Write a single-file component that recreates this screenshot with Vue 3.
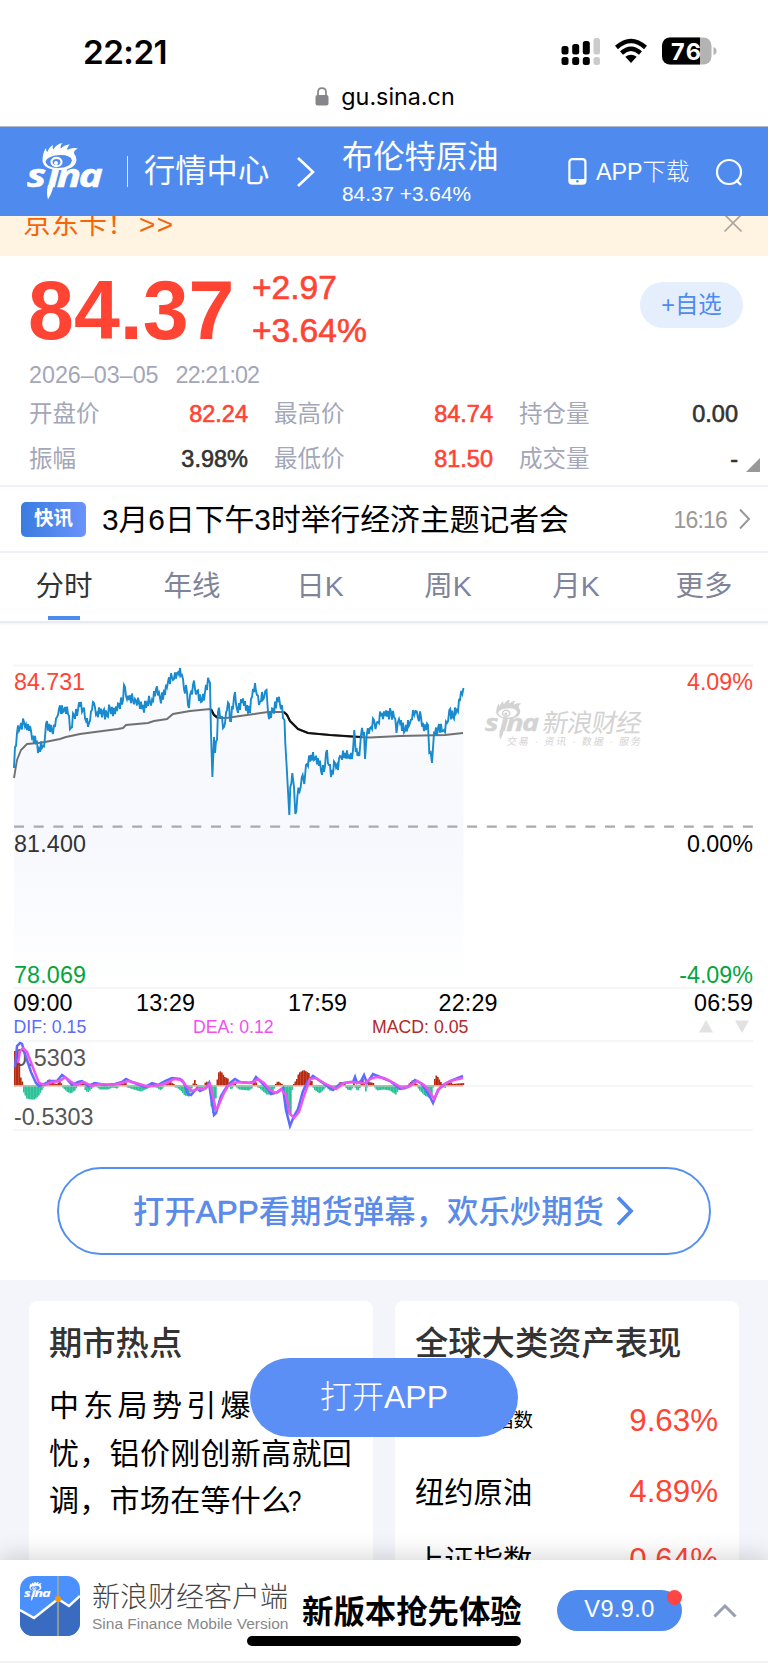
<script setup>
const quote = {
  name: '布伦特原油',
  price: '84.37',
  change: '+2.97',
  percent: '+3.64%',
  date: '2026–03–05',
  time: '22:21:02'
}

const stats = [
  { label: '开盘价', value: '82.24', up: true },
  { label: '最高价', value: '84.74', up: true },
  { label: '持仓量', value: '0.00' },
  { label: '振幅', value: '3.98%' },
  { label: '最低价', value: '81.50', up: true },
  { label: '成交量', value: '-' }
]

const tabs = ['分时', '年线', '日K', '周K', '月K', '更多']

const assets = [
  { name: '指数', value: '9.63%', small: true },
  { name: '纽约原油', value: '4.89%' },
  { name: '上证指数', value: '0.64%' }
]

const timeLabels = [
  { x: 13.5, text: '09:00' },
  { x: 136, text: '13:29' },
  { x: 288, text: '17:59' },
  { x: 438.5, text: '22:29' }
]

// intraday price, chart coordinates
const price = [
  [14, 146], [15, 125], [17, 111], [20, 106], [24, 100], [27, 108], [30, 104], [33, 115], [36, 121], [39, 127],
  [43, 124], [45, 115], [47, 99], [50, 110], [55, 105], [57, 95], [59, 87], [63, 90], [65, 85], [68, 92],
  [71, 106], [74, 93], [78, 88], [81, 80], [83, 88], [86, 99], [89, 101], [92, 88], [94, 81], [97, 91],
  [103, 89], [107, 94], [110, 86], [115, 92], [119, 82], [123, 78], [124, 63], [126, 74], [129, 78], [135, 77],
  [139, 80], [142, 87], [147, 81], [152, 78], [156, 67], [160, 76], [165, 73], [168, 60], [172, 55], [174, 57],
  [177, 51], [180, 46], [182, 53], [184, 67], [187, 70], [189, 86], [191, 70], [193, 63], [197, 69], [201, 80],
  [205, 70], [209, 59], [210, 61], [211, 111], [212.4, 155], [214, 115], [215, 131], [217, 118], [218, 90], [221, 95],
  [224, 105], [227, 88], [229, 82], [230, 99], [233, 86], [235, 70], [237, 87], [242, 81], [247, 83], [250, 91],
  [252, 75], [255, 61], [257, 73], [259, 83], [262, 70], [264, 76], [266.5, 68], [268, 90], [271, 96], [273, 87],
  [278, 80], [282, 83], [283, 96], [284.5, 98], [285.3, 121], [286.7, 145], [289.3, 193], [290.3, 165], [292.3, 151], [294, 165],
  [295.3, 192], [297.3, 175], [300.7, 165], [302.7, 153], [304.3, 162], [306, 143], [311, 133], [315, 137], [318, 136], [321, 149],
  [325, 144], [327, 128], [329, 143], [331, 155], [335, 141], [338, 148], [340, 134], [345, 131], [350, 137], [353, 128],
  [354.3, 108], [355.7, 130], [359.3, 134], [361, 113], [364, 110], [365, 137], [366.7, 113], [370, 106], [374, 98], [375.5, 107],
  [378, 100], [382, 91], [385, 94], [391, 90], [394, 95], [396.5, 111], [399, 97], [405, 109], [410, 101], [413, 88],
  [415.5, 89], [418, 96], [421, 95], [424, 109], [428, 103], [429.3, 131], [432, 141], [434, 111], [438, 106], [443, 109],
  [447, 101], [449.3, 88], [453, 95], [457, 88], [460, 78], [463.5, 66]
]

const average = [
  [14, 156], [17, 138], [21, 128], [27, 122], [38, 121], [45, 120], [60, 117], [66, 115], [80, 112], [95, 110],
  [118, 107], [123, 106], [126, 103], [148, 101], [154, 99], [167, 97], [173, 92], [190, 89], [210, 87], [214, 93],
  [218, 96], [226, 96], [240, 94], [268, 90], [284, 90], [287, 93], [290, 99], [294, 103], [298, 107], [308, 111],
  [330, 113], [355, 115], [370, 115.5], [400, 114], [445, 113], [463, 111]
]

const dif = [
  [15, 445], [17, 424], [20, 421], [22, 422], [26, 435], [31, 450], [36, 461], [39, 464], [44, 462], [50, 459],
  [57, 459], [62, 453], [66, 456], [72, 463], [78, 460], [82, 459], [88, 464], [95, 461], [105, 463], [115, 462],
  [122, 460], [126, 457], [132, 460], [145, 465], [152, 461], [158, 463], [165, 459], [172, 456], [180, 457], [184, 461],
  [188, 472], [191, 473], [197, 466], [200, 469], [206, 466], [209, 461], [211, 475], [214, 493], [216, 491], [221, 474],
  [226, 466], [230, 461], [235, 457], [240, 460], [249, 461], [253, 460], [256, 455], [262, 461], [268, 467], [271, 472],
  [278, 470], [283, 466], [286, 488], [290, 504], [294, 494], [298, 487], [303, 469], [308, 459], [313, 454], [320, 459],
  [327, 464], [333, 468], [340, 462], [350, 460], [353, 460], [355, 455], [357, 461], [361, 459], [364, 453], [367, 461],
  [373, 452], [380, 455], [390, 459], [400, 467], [408, 465], [415, 458], [422, 462], [430, 475], [433, 481], [438, 468],
  [442, 464], [450, 459], [463, 454]
]

const dea = [
  [18, 441], [20, 429], [23, 426], [27, 430], [32, 443], [39, 461], [45, 463], [52, 460], [60, 459], [65, 455],
  [70, 459], [76, 463], [84, 460], [92, 464], [100, 462], [112, 463], [122, 461], [128, 459], [136, 461], [146, 464],
  [153, 464], [160, 463], [167, 461], [174, 457], [182, 458], [186, 464], [192, 469], [198, 467], [204, 467], [210, 462],
  [213, 475], [216, 488], [218, 485], [223, 473], [228, 464], [234, 461], [239, 460], [252, 461], [258, 457], [264, 461],
  [270, 468], [276, 471], [281, 467], [286, 473], [290, 492], [294, 496], [299, 490], [304, 474], [310, 457], [316, 456],
  [324, 461], [330, 464], [336, 467], [344, 461], [352, 460], [360, 461], [365, 461], [370, 457], [376, 455], [384, 456],
  [394, 461], [402, 466], [410, 464], [417, 459], [424, 463], [430, 470], [434, 477], [439, 467], [446, 461], [454, 458],
  [463, 456]
]

const histogram = [
  [14, 34], [17, 33], [18.4, 25], [19, 8], [21, 7], [22, 0], [23, -6], [26, -12], [30, -13], [34, -13], [38, -9], [42, -2],
  [44, 1], [48, 6], [52, 2], [56, 1], [59, 4], [61, 1], [63, -2], [66, -5], [70, -7], [74, -4], [76, -1],
  [80, 4], [83, 1], [84, -3], [87, -6], [91, -2], [94, 4], [97, -1], [99, -3], [107, -3], [112, -1], [116, -2],
  [119, 1], [124, 4], [127, -1], [133, -3], [140, -5], [147, -2], [153, 2], [156, -1], [160, -4], [164, 1],
  [168, 4], [173, 1], [176, -1], [180, -4], [184, -9], [188, -10], [191, -2], [194, 5], [197, -3], [201, -5],
  [204, 2], [207, 4], [209, -5], [211, -25], [213, -28], [215, -12], [216, -1], [217, 12], [220, 14], [224, 8],
  [228, 6], [229, -2], [231, -3], [234, 3], [238, -3], [248, -4], [251, -2], [254, 7], [256, 1], [259, -2],
  [266, -8], [270, -8], [273, -3], [277, 4], [281, 1], [282, -4], [284, -14], [287, -28], [290, -27], [291, -5],
  [293, 1], [296, 6], [298, 12], [303, 15], [308, 12], [311, 4], [313, -3], [319, -7], [324, -2], [326, 1],
  [328, -4], [333, -4], [337, -1], [339, 3], [344, 2], [346, -3], [351, -4], [353, 4], [355, -3], [358, -4],
  [362, 6], [365, -5], [368, 3], [373, 2], [376, -4], [383, -3], [389, -4], [395, -8], [398, -3], [404, -3],
  [408, 1], [412, 5], [416, 1], [418, -3], [424, -9], [430, -12], [432, -4], [433, 2], [435, 10], [437, 8],
  [440, 3], [444, -2], [449, 4], [452, 1], [463, 2]
]

const toPoints = (list) => list.map((p) => p.join(',')).join(' ')

function sample(list, x) {
  const i = list.findIndex((p) => p[0] >= x)
  if (i <= 0) return list[0][1]
  const [x0, y0] = list[i - 1]
  const [x1, y1] = list[i]
  return y0 + ((y1 - y0) * (x - x0)) / (x1 - x0)
}

// add minute noise between the main price points
const ticks = []
const noise = [4.5, -5, 2, -3, 6, -4.5, 3.5, -6, 1, 5, -3.5]
price.forEach((p, i) => {
  ticks.push(p)
  const next = price[i + 1]
  if (!next || Math.abs(next[1] - p[1]) > 18) return
  const gap = next[0] - p[0]
  const count = Math.floor(gap / 0.9)
  for (let k = 1; k < count; k++) {
    const x = p[0] + (gap * k) / count
    ticks.push([x.toFixed(1), (sample(price, x) + noise[(i * 3 + k) % noise.length]).toFixed(1)])
  }
})
const pricePoints = toPoints(ticks)
const areaPoints = `14,365 ${pricePoints} 463.5,365`

const bars = []
for (let x = 14; x < 463; x += 1.5) {
  const h = sample(histogram, x)
  bars.push({ x, h: Math.max(Math.abs(h), 1), up: h > 0 })
}
</script>

<template>
  <div class="page">
    <svg class="defs" width="0" height="0">
      <symbol id="sina" viewBox="0 0 77 57">
        <path
          fill="currentColor"
          d="M15.500 18 Q15.500 10 19 5 Q19 8 20.500 9 Q22 4 26 2 Q25 5 26.500 6.500 Q29 1 35.500 0 Q32.500 3 34 5.500 Q37.500 1.500 43 1.500 Q39.500 4.500 40.500 7 Q45 4 51 5.500 Q46.500 7.500 47 10.500 Q49.500 13 49.500 17 Q48.500 26.500 33 27 Q17 27 15.500 18 Z M18.500 18.500 Q19.500 25 31 25 Q43.500 25 45 17.500 Q44 12 33.500 12 Q20.500 12.500 18.500 18.500 Z"
          fill-rule="evenodd"
        />
        <ellipse cx="29.500" cy="19" rx="5" ry="4.200" fill="none" stroke="currentColor" stroke-width="2.200" />
        <circle cx="29" cy="20" r="2" fill="currentColor" />
        <text
          x="0 16 23.300 40.500" y="44.500" font-size="31.500" fill="currentColor"
          stroke="currentColor" stroke-width="0.500" transform="scale(1.28 1)" class="wordmark"
        >sına</text>
        <path fill="currentColor" d="M21 42 H26.500 Q25.500 49 21 56.500 Q19 50 21 42 Z" />
      </symbol>
    </svg>

    <header class="status">
      <div class="status-row">
        <span class="clock">22:21</span>
        <svg class="status-icons" width="158" height="30" viewBox="0 0 158 30">
          <g fill="#000">
            <rect x="0.500" y="9" width="7" height="8.500" rx="2.500" />
            <rect x="11.200" y="7" width="7" height="10.500" rx="2.500" />
            <rect x="21.800" y="4" width="7" height="13.500" rx="2.500" />
            <rect x="0.500" y="20" width="7" height="8" rx="2.500" />
            <rect x="11.200" y="20" width="7" height="8" rx="2.500" />
            <rect x="21.800" y="20" width="7" height="8" rx="2.500" />
          </g>
          <g fill="#cbcbcb">
            <rect x="32.500" y="1" width="6.500" height="16.500" rx="2.500" />
            <rect x="32.500" y="20" width="6.500" height="8" rx="2.500" />
          </g>
          <g fill="none" stroke="#000" stroke-width="4.400">
            <path d="M55.500 10.500 Q70 -2.500 84.500 10.500" />
            <path d="M60.500 16 Q70 7.500 79.500 16" />
          </g>
          <path d="M64.300 19.800 Q70 15.500 75.700 19.800 L70 26 Z" />
          <rect x="101" y="0.500" width="49.500" height="27" rx="8" fill="#b3b3b3" />
          <path d="M109 .5 H139 V27.500 H109 A8 8 0 0 1 101 19.500 V8.500 A8 8 0 0 1 109 .5Z" />
          <path d="M152.500 10 Q155.500 11 155.500 14 Q155.500 17 152.500 18Z" fill="#b3b3b3" />
          <text x="110" y="22.500" fill="#fff" font-size="23.500" font-weight="700" textLength="30" class="sf">76</text>
        </svg>
      </div>
      <div class="url">
        <svg width="14" height="19" viewBox="0 0 14 19">
          <path d="M3 9 V5.500 Q3 1.200 7 1.200 Q11 1.200 11 5.500 V9" fill="none" stroke="#85858a" stroke-width="1.700" />
          <rect x="0.500" y="8" width="13" height="10.500" rx="2" fill="#85858a" />
        </svg>
        <span>gu.sina.cn</span>
      </div>
    </header>

    <nav class="topbar">
      <svg class="logo" width="77" height="57"><use href="#sina" /></svg>
      <i class="divider"></i>
      <span class="center">行情中心</span>
      <svg class="crumb" width="20" height="32" viewBox="0 0 20 32">
        <path d="M2 2 L17 16 L2 30" fill="none" stroke="#fff" stroke-width="2.600" />
      </svg>
      <div class="instrument">
        <strong>{{ quote.name }}</strong>
        <span>{{ quote.price }} {{ quote.percent }}</span>
      </div>
      <svg width="19" height="27" viewBox="0 0 19 27">
        <rect x="1.400" y="1.200" width="16" height="24.500" rx="3" fill="none" stroke="#fff" stroke-width="2.200" />
        <path d="M1.500 21 H17 V23 Q17 25 15 25 H3.500 Q1.500 25 1.500 23Z" fill="#fff" />
        <circle cx="9.400" cy="23.200" r="1.300" fill="#4f8bee" />
      </svg>
      <span class="download">APP下载</span>
      <svg class="search" width="28" height="28" viewBox="0 0 28 28">
        <circle cx="14" cy="14" r="12" fill="none" stroke="#fff" stroke-width="2.200" />
        <path d="M21 22 L26 27" stroke="#fff" stroke-width="2.400" />
      </svg>
    </nav>

    <main class="content">
      <div class="notice">
        <span>京东卡！<b class="more">&gt;&gt;</b></span>
        <svg width="20" height="20" viewBox="0 0 20 20">
          <path d="M1.500 1.500 L18.500 18.500 M18.500 1.500 L1.500 18.500" stroke="#aaa59e" stroke-width="1.700" />
        </svg>
      </div>

      <section class="quote">
        <div class="headline">
          <span class="price">{{ quote.price }}</span>
          <div class="delta">
            <span>{{ quote.change }}</span>
            <span>{{ quote.percent }}</span>
          </div>
          <button type="button" class="add">+自选</button>
        </div>
        <p class="stamp"><span>{{ quote.date }}</span><span>{{ quote.time }}</span></p>
        <div class="stats">
          <div v-for="item in stats" :key="item.label" class="stat">
            <span class="stat-label">{{ item.label }}</span>
            <span class="stat-value" :class="{ up: item.up }">{{ item.value }}</span>
          </div>
        </div>
        <i class="corner"></i>
      </section>

      <section class="flash">
        <span class="badge">快讯</span>
        <span class="flash-title">3月6日下午3时举行经济主题记者会</span>
        <span class="flash-time">16:16</span>
        <svg width="13" height="22" viewBox="0 0 13 22">
          <path d="M2 1.500 L11 11 L2 20.500" fill="none" stroke="#999" stroke-width="2" />
        </svg>
      </section>

      <div class="tabs">
        <span v-for="(tab, i) in tabs" :key="tab" class="tab" :class="{ active: i === 0 }">{{ tab }}</span>
      </div>

      <svg class="chart" width="768" height="517" viewBox="0 1 768 517">
        <defs>
          <linearGradient id="fade" x1="0" y1="0" x2="0" y2="1">
            <stop offset="0" stop-color="#f9fbfe" />
            <stop offset="0.550" stop-color="#f6f8fd" />
            <stop offset="1" stop-color="#fff" />
          </linearGradient>
        </defs>
        <path d="M13 43.500 H753 M13 366 H753 M13 419 H753 M13 464 H753 M13 508 H753" stroke="#f5f6f8" stroke-width="2" />
        <polygon :points="areaPoints" fill="url(#fade)" />

        <g class="watermark">
          <svg x="485" y="77.500" width="55" height="41"><use href="#sina" /></svg>
          <text x="561" y="110.500" font-size="25.500" textLength="99" transform="skewX(-10)">新浪财经</text>
          <text x="528" y="123" font-size="10" textLength="134" transform="skewX(-10)">交易 · 资讯 · 数据 · 服务</text>
        </g>

        <path d="M14 204.700 H753" stroke="#aaa" stroke-width="2.200" stroke-dasharray="10 9.700" />
        <polyline :points="toPoints(average)" fill="none" stroke="#707070" stroke-width="1.900" />
        <path d="M211 87 L214 93 L218 96 M284 90 L287 93 L290 99 L294 103 L298 107 L308 111 L330 113 L362 115" fill="none" stroke="#111" stroke-width="2.200" />
        <polyline :points="pricePoints" fill="none" stroke="#188acd" stroke-width="1.900" />

        <g font-size="23.300">
          <text x="14" y="68" fill="#ff4433" textLength="71">84.731</text>
          <text x="14" y="230" fill="#333" textLength="72">81.400</text>
          <text x="14" y="361" fill="#00a63e" textLength="72">78.069</text>
          <text x="753" y="68" fill="#ff4433" text-anchor="end">4.09%</text>
          <text x="753" y="230" text-anchor="end">0.00%</text>
          <text x="753" y="361" fill="#00a63e" text-anchor="end">-4.09%</text>
          <text v-for="label in timeLabels" :key="label.text" :x="label.x" y="388.500" textLength="59">{{ label.text }}</text>
          <text x="753" y="388.500" text-anchor="end" textLength="59">06:59</text>
          <text x="14" y="443.500" fill="#555" textLength="72">0.5303</text>
          <text x="14" y="502.500" fill="#555" textLength="79.500">-0.5303</text>
        </g>
        <g font-size="17.700">
          <text x="13.500" y="410.500" fill="#5b6cff">DIF: 0.15</text>
          <text x="193" y="410.500" fill="#f050f0">DEA: 0.12</text>
          <text x="372" y="410.500" fill="#b22a2a">MACD: 0.05</text>
        </g>
        <path d="M699 410.500 L706 398 L713 410.500Z M735 398.500 H749 L742 411Z" fill="#e2e2e2" />

        <path d="M14 463.700 H463" stroke="#f0a090" stroke-width="1.500" />
        <rect
          v-for="bar in bars" :key="bar.x" :x="bar.x" :y="bar.up ? 463 - bar.h : 464.5"
          width="1.700" :height="bar.h" :fill="bar.up ? '#b82b10' : '#2cc197'"
        />
        <polyline :points="toPoints(dif)" fill="none" stroke="#5b6cff" stroke-width="2.500" />
        <polyline :points="toPoints(dea)" fill="none" stroke="#ee55ee" stroke-width="2.500" />
      </svg>

      <button type="button" class="cta">
        <span>打开<b class="latin">APP</b>看期货弹幕，欢乐炒期货</span>
        <svg width="20" height="30" viewBox="0 0 20 30">
          <path d="M3 1.500 L16 15 L3 28.500" fill="none" stroke="#5089ee" stroke-width="3.800" />
        </svg>
      </button>

      <section class="cards">
        <article class="card">
          <h2>期市热点</h2>
          <p class="story"><span class="wide">中东局势引爆</span><br>忧，铝价刚创新高就回<br>调，市场在等什么<span class="mark">?</span></p>
        </article>
        <article class="card">
          <h2>全球大类资产表现</h2>
          <div v-for="asset in assets" :key="asset.name" class="asset">
            <span :class="{ small: asset.small }">{{ asset.name }}</span>
            <span class="asset-value">{{ asset.value }}</span>
          </div>
        </article>
      </section>
    </main>

    <button type="button" class="open-app">打开APP</button>

    <footer class="download-bar">
      <svg class="app-icon" width="60" height="60" viewBox="0 0 60 60">
        <defs>
          <clipPath id="icon"><rect width="60" height="60" rx="13" /></clipPath>
        </defs>
        <g clip-path="url(#icon)">
          <rect width="60" height="60" fill="#4a90ff" />
          <path d="M0 35 L14 43 L38 24 L49 30 L60 21 V60 H0Z" fill="#396bc0" />
          <path d="M0 34 L14 42 L38 23 L49 30 L60 20" fill="none" stroke="#fff" stroke-width="2.400" />
          <path d="M38 0 V60" stroke="#a8a88f" stroke-width="1.500" />
          <circle cx="38" cy="23" r="3" fill="#ff9800" />
          <svg x="4" y="5.500" width="27" height="20" class="icon-logo"><use href="#sina" /></svg>
        </g>
      </svg>
      <div class="app-name">
        <span class="app-cn">新浪财经客户端</span>
        <span class="app-en">Sina Finance Mobile Version</span>
      </div>
      <strong class="slogan">新版本抢先体验</strong>
      <span class="version">V9.9.0<i class="dot"></i></span>
      <svg class="up-arrow" width="24" height="14" viewBox="0 0 24 14">
        <path d="M1.500 12.500 L12 2 L22.500 12.500" fill="none" stroke="#9a9fb2" stroke-width="3" />
      </svg>
      <i class="home-indicator"></i>
    </footer>
  </div>
</template>

<style>
body {
  margin: 0;
  background: #fff;
}
</style>

<style scoped>
.page {
  position: relative;
  display: flex;
  flex-direction: column;
  width: 768px;
  height: 1663px;
  overflow: hidden;
  font-family: 'Liberation Sans', 'Noto Sans CJK SC', sans-serif;
  color: #000;
}

button {
  padding: 0;
  border: 0;
  font-family: inherit;
}

svg {
  display: block;
  flex: none;
}

.defs {
  position: absolute;
}

.wordmark {
  font-family: 'Open Sans', sans-serif;
  font-weight: 700;
  font-style: italic;
}

.sf {
  font-family: Inter, sans-serif;
}

.status {
  box-sizing: border-box;
  height: 127px;
  padding-top: 31px;
  border-bottom: 1px solid #b5bac6;
  font-family: Inter, sans-serif;
}

.status-row {
  display: flex;
  justify-content: space-between;
  align-items: center;
  height: 41px;
  padding: 0 49px 0 83px;
}

.clock {
  font-size: 33.2px;
  font-weight: 600;
  letter-spacing: -0.5px;
}

.url {
  display: flex;
  justify-content: center;
  align-items: center;
  gap: 12px;
  height: 48px;
  padding-left: 2px;
  font-size: 23.3px;
}

.topbar {
  display: flex;
  align-items: center;
  box-sizing: border-box;
  height: 89px;
  padding: 0 25px 0 26px;
  background: #4f8bee;
  color: #fff;
  flex: none;
}

.logo {
  margin-left: 1px;
}

.divider {
  width: 1px;
  height: 31px;
  margin-left: 23px;
  background: #dce8fc;
}

.center {
  width: 124px;
  margin-left: 16px;
  font-size: 31.3px;
  line-height: 40px;
  white-space: nowrap;
}

.crumb {
  margin-left: 28px;
}

.instrument {
  display: flex;
  flex-direction: column;
  width: 226px;
  margin-left: 26px;
  padding-top: 2px;
  font-size: 20.8px;
  line-height: 31px;
}

.instrument strong {
  font-size: 31.3px;
  font-weight: 400;
  line-height: 41px;
}

.download {
  width: 93px;
  margin: -4px 0 0 9px;
  font-size: 23.3px;
  font-weight: 300;
  white-space: nowrap;
}

.search {
  margin-left: auto;
}

.content {
  flex: 1;
  min-height: 0;
  overflow: hidden;
}

.notice {
  display: flex;
  justify-content: space-between;
  box-sizing: border-box;
  height: 40px;
  padding: 0 25px 0 23px;
  overflow: hidden;
  background: #fff3e2;
  color: #f5650a;
  font-size: 28px;
  line-height: 40px;
}

.notice span {
  margin-top: -11px;
}

.notice .more {
  margin-left: 4px;
  font-weight: 400;
  letter-spacing: 1.5px;
}

.notice svg {
  margin-top: -3px;
}

.quote {
  position: relative;
  box-sizing: border-box;
  height: 231px;
  padding: 10px 25px 0 28px;
  border-bottom: 2px solid #f0f1f7;
}

.headline {
  display: flex;
  height: 90px;
  color: #ff4433;
}

.price {
  width: 224px;
  font-size: 82.5px;
  font-weight: 700;
  line-height: 88px;
}

.delta {
  display: flex;
  flex-direction: column;
  font-size: 33.6px;
  line-height: 43px;
  -webkit-text-stroke: 0.6px;
}

.add {
  width: 103px;
  height: 46px;
  margin: 16px 0 0 auto;
  padding-bottom: 5px;
  border-radius: 23px;
  background: #e4eefd;
  color: #4f8bee;
  font-size: 23.4px;
}

.stamp {
  display: flex;
  gap: 17px;
  margin: 5px 0 0;
  padding-left: 1px;
  color: #a3a7b8;
  font-size: 23.3px;
  line-height: 28px;
}

.stamp span:last-child {
  letter-spacing: -0.9px;
}

.stats {
  display: grid;
  grid-template-columns: repeat(3, 219px);
  column-gap: 26px;
  margin-top: 3px;
  padding-left: 1px;
}

.stat {
  display: flex;
  justify-content: space-between;
  height: 45px;
  font-size: 23.5px;
  line-height: 45px;
}

.stat-label {
  color: #a3a7b8;
}

.stat-value {
  color: #333;
  -webkit-text-stroke: 0.6px;
}

.stat-value.up {
  color: #ff4433;
}

.corner {
  position: absolute;
  right: 8px;
  bottom: 13px;
  border-left: 14px solid transparent;
  border-bottom: 14px solid #999;
}

.flash {
  display: flex;
  align-items: center;
  box-sizing: border-box;
  height: 66px;
  padding: 0 17px 0 21px;
  border-bottom: 2px solid #f0f1f7;
}

.badge {
  width: 65px;
  height: 35px;
  border-radius: 5px;
  background: linear-gradient(90deg, #3a7ce0, #6b93fa);
  color: #fff;
  font-size: 19.5px;
  font-weight: 700;
  line-height: 33px;
  text-align: center;
}

.flash-title {
  margin-left: 16px;
  padding-top: 2px;
  font-size: 29.8px;
  line-height: 44px;
}

.flash-time {
  margin: 2px 11px 0 auto;
  color: #999;
  font-size: 23px;
  letter-spacing: -0.8px;
}

.tabs {
  display: grid;
  grid-template-columns: repeat(6, 1fr);
  box-sizing: border-box;
  height: 70px;
  border-bottom: 2px solid #e9ebf4;
  box-shadow: 0 1px 2px #f1f2f8;
}

.tab {
  display: flex;
  flex-direction: column;
  align-items: center;
  padding-top: 11px;
  color: #7f8499;
  font-size: 28.5px;
  line-height: 44px;
}

.tab.active {
  color: #333;
}

.tab.active::after {
  content: '';
  width: 32px;
  height: 4px;
  margin-top: 8px;
  background: #4f8bee;
}

.chart {
  font-family: 'Liberation Sans', 'Noto Sans CJK SC', sans-serif;
}

.watermark {
  color: #d3d3d3;
  fill: #d3d3d3;
}

.cta {
  display: flex;
  justify-content: center;
  align-items: center;
  gap: 11px;
  box-sizing: border-box;
  width: 654px;
  height: 88px;
  margin: 27px auto 25px;
  border: 2px solid #5590f0;
  border-radius: 44px;
  background: #fff;
  color: #5b8be8;
  font-size: 31.4px;
  font-weight: 500;
}

.cta span {
  margin-top: -4px;
}

.latin {
  font-weight: 400;
  -webkit-text-stroke: 0.7px;
}

.cards {
  display: flex;
  gap: 22px;
  padding: 21px 29px 0;
  background: #f4f5fb;
}

.card {
  box-sizing: border-box;
  width: 344px;
  height: 340px;
  padding: 19px 21px 0 20px;
  border-radius: 8px;
  background: #fff;
}

.card h2 {
  margin: 0;
  color: #333;
  font-size: 33.3px;
  font-weight: 500;
  line-height: 48px;
  white-space: nowrap;
}

.story {
  margin: 14px 0 0;
  font-size: 30px;
  line-height: 47.5px;
  letter-spacing: 0.3px;
  white-space: nowrap;
}

.wide {
  letter-spacing: 4.3px;
}

.mark {
  display: inline-block;
  margin-left: -3px;
  transform: scaleX(0.8);
  transform-origin: left;
}

.asset {
  display: flex;
  justify-content: space-between;
  align-items: center;
  height: 71px;
  font-size: 29.3px;
}

.card h2 + .asset {
  margin-top: 16px;
}

.asset:last-child {
  height: 65px;
}

.asset > span:first-child {
  margin-top: -2px;
}

.small {
  margin-left: 79px;
  font-size: 19.5px;
}

.asset-value {
  padding-top: 2px;
  color: #ff4433;
  font-size: 31.3px;
}

.open-app {
  position: absolute;
  left: 250px;
  top: 1358px;
  width: 268px;
  height: 79px;
  padding-bottom: 8px;
  border-radius: 40px;
  background: #5c8ff6;
  color: #fff;
  font-size: 32px;
  font-weight: 300;
}

.download-bar {
  position: relative;
  display: flex;
  align-items: flex-start;
  box-sizing: border-box;
  height: 103px;
  padding: 16px 31px 0 20px;
  background: #fff;
  border-bottom: 2px solid #f2f2f2;
  box-shadow: 0 -4px 22px rgba(0, 0, 0, 0.16);
}

.icon-logo {
  color: #fff;
}

.app-name {
  display: flex;
  flex-direction: column;
  width: 196px;
  margin-left: 12px;
  padding-top: 3px;
  white-space: nowrap;
}

.app-cn {
  color: #444;
  font-size: 28px;
  font-weight: 300;
  line-height: 37px;
}

.app-en {
  color: #888;
  font-size: 15.5px;
  line-height: 16px;
}

.slogan {
  margin: 15px 0 0 14px;
  font-size: 31.4px;
  line-height: 44px;
}

.version {
  position: relative;
  width: 125px;
  height: 41px;
  margin: 14px 0 0 auto;
  border-radius: 21px;
  background: #4f8bee;
  color: #fff;
  font-size: 23.5px;
  line-height: 39px;
  letter-spacing: 0.4px;
  text-align: center;
}

.dot {
  position: absolute;
  top: 0;
  right: 0;
  width: 15px;
  height: 15px;
  border-radius: 50%;
  background: #ff4444;
}

.up-arrow {
  margin: 28px 0 0 31px;
}

.home-indicator {
  position: absolute;
  left: 247px;
  bottom: 15px;
  width: 274px;
  height: 10px;
  border-radius: 5px;
  background: #000;
}
</style>
